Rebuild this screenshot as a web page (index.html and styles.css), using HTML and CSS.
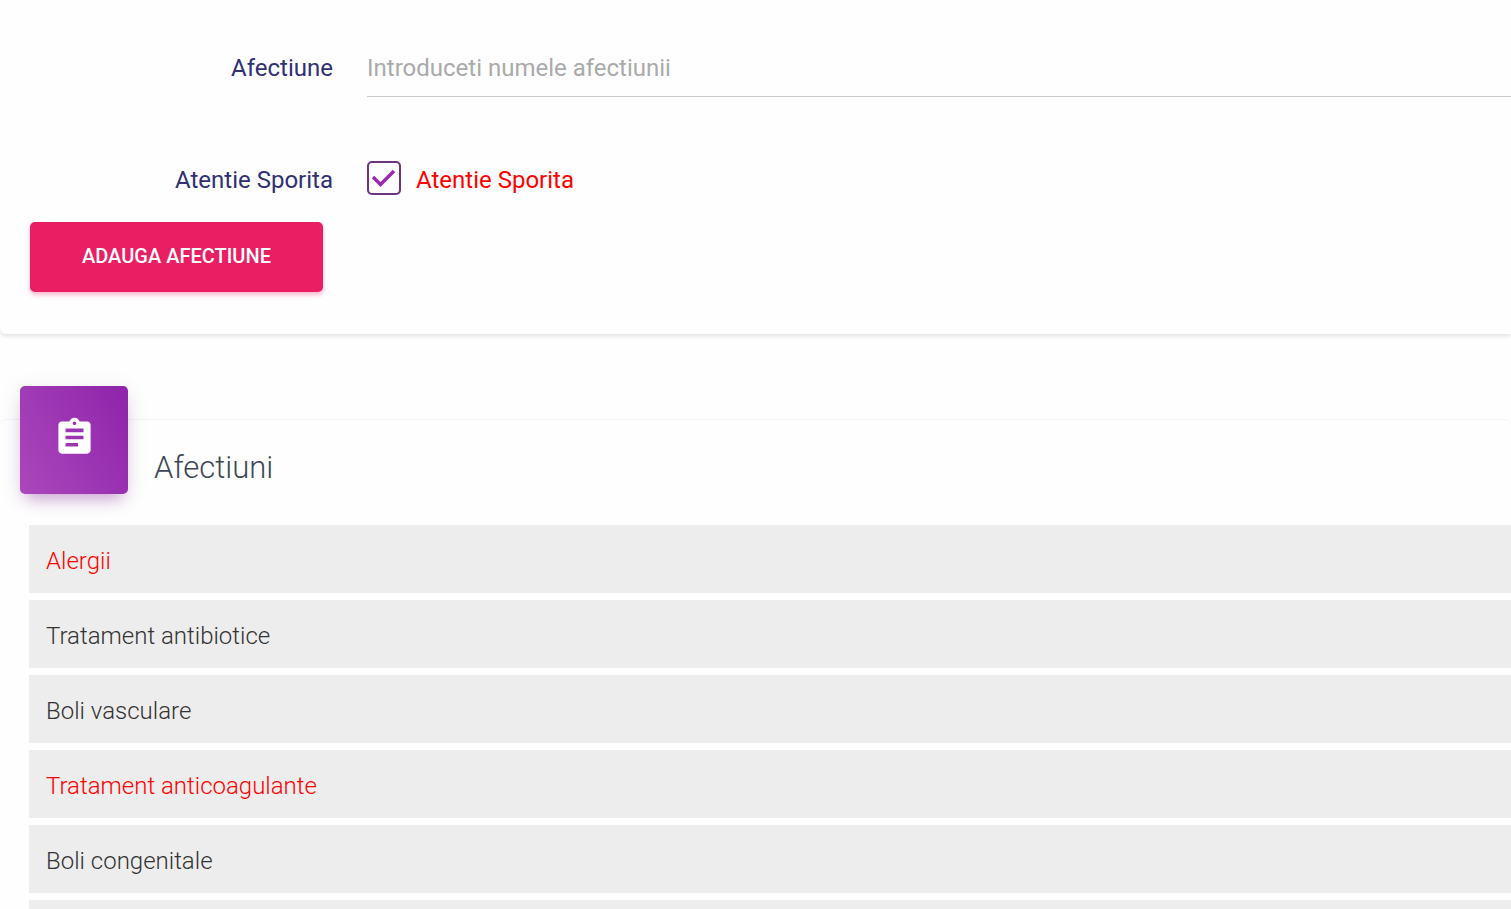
FILE: index.html
```html
<!DOCTYPE html>
<html lang="ro">
<head>
<meta charset="utf-8">
<meta name="viewport" content="width=device-width, initial-scale=1">
<title>Afectiuni</title>
<link rel="stylesheet" href="styles.css">
</head>
<body>
<main class="page">
  <form class="card form-card">
    <div class="form-row">
      <label class="form-label" for="afectiune">Afectiune</label>
      <input class="text-input" id="afectiune" type="text" placeholder="Introduceti numele afectiunii">
    </div>
    <div class="form-row check-row">
      <span class="form-label">Atentie Sporita</span>
      <label class="check">
        <span class="check-box">
          <input class="check-input" type="checkbox" checked>
          <svg class="check-mark" viewBox="0 0 34 34" aria-hidden="true"><path d="M6 16l7.500 7.500L27 10" fill="none" stroke="#9c27b0" stroke-width="3.400"/></svg>
        </span>
        <span class="check-text">Atentie Sporita</span>
      </label>
    </div>
    <button class="btn" type="button">ADAUGA AFECTIUNE</button>
  </form>

  <section class="card list-card">
    <header class="card-header">
      <div class="card-icon">
        <svg class="icon" viewBox="0 0 24 24" aria-hidden="true"><path fill="#fff" d="M19 3h-4.180C14.400 1.840 13.300 1 12 1c-1.300 0-2.400.840-2.820 2H5c-1.100 0-2 .900-2 2v14c0 1.100.900 2 2 2h14c1.100 0 2-.900 2-2V5c0-1.100-.900-2-2-2zm-7 0c.550 0 1 .450 1 1s-.450 1-1 1-1-.450-1-1 .450-1 1-1zm2 14H7v-2h7v2zm3-4H7v-2h10v2zm0-4H7V7h10v2z"/></svg>
      </div>
      <h1 class="card-title">Afectiuni</h1>
    </header>
    <ul class="list">
      <li class="item alert">Alergii</li>
      <li class="item">Tratament antibiotice</li>
      <li class="item">Boli vasculare</li>
      <li class="item alert">Tratament anticoagulante</li>
      <li class="item">Boli congenitale</li>
      <li class="item"></li>
    </ul>
  </section>
</main>
</body>
</html>
```
FILE: styles.css
```css
* { box-sizing: border-box; }

body {
  margin: 0;
  background: #fefefe;
  font-family: Roboto, "Liberation Sans", sans-serif;
  font-size: 24px;
  line-height: 34px;
  overflow: hidden;
}

.page { height: 100vh; overflow: hidden; }

.card {
  background: #fefefe;
  border-radius: 6px;
}

.form-card {
  display: flex;
  flex-direction: column;
  align-items: flex-start;
  padding: 38px 0 42px 30px;
  border-radius: 0 0 0 6px;
  box-shadow: 0 2px 4px rgba(0, 0, 0, 0.12);
}

.form-row {
  display: grid;
  grid-template-columns: 303px 1fr;
  column-gap: 34px;
  align-items: center;
  align-self: stretch;
}

.form-label {
  color: #303074;
  text-align: right;
}

.text-input {
  width: 100%;
  height: 59px;
  padding: 2px 0 0;
  border: 0;
  border-bottom: 1px solid #c8c8c8;
  background: transparent;
  font: inherit;
  color: #333;
  outline: 0;
}

.text-input::placeholder { color: #aaa; opacity: 1; }

.check-row {
  align-items: start;
  margin: 64px 0 25px;
}

.check-row .form-label,
.check-text { padding-top: 2px; }

.check {
  display: flex;
  align-items: flex-start;
  gap: 15px;
  color: #f00;
}

.check-box { display: grid; }

.check-input,
.check-mark {
  grid-area: 1 / 1;
  width: 34px;
  height: 34px;
}

.check-input {
  appearance: none;
  margin: 0;
  border: 2px solid #6b3580;
  border-radius: 5px;
}

.check-mark { pointer-events: none; visibility: hidden; }
.check-input:checked + .check-mark { visibility: visible; }

.btn {
  padding: 17px 52px 19px;
  border: 0;
  border-radius: 5px;
  background: #e91e63;
  box-shadow: 0 3px 4px rgba(233, 30, 99, 0.3);
  color: #fff;
  font: 500 20px/34px Roboto, "Liberation Sans", sans-serif;
}

.list-card {
  margin-top: 85px;
  border-top: 1px solid #f2f2f2;
}

.card-header {
  display: flex;
  align-items: flex-end;
  gap: 26px;
  margin-top: -34px;
  padding-left: 20px;
}

.card-icon {
  display: grid;
  place-items: center;
  width: 108px;
  height: 108px;
  padding-bottom: 6px;
  border-radius: 5px;
  background: linear-gradient(60deg, #ab47bc, #8e24aa);
  box-shadow: 0 4px 24px rgba(0, 0, 0, 0.08), 0 10px 15px -6px rgba(156, 39, 176, 0.4);
}

.icon { width: 43px; height: 43px; }

.card-title {
  margin: 0 0 8px;
  color: #3c4858;
  font-size: 31px;
  font-weight: 300;
  line-height: 36px;
}

.list {
  display: grid;
  gap: 7px;
  margin: 31px 0 0;
  padding: 0 0 0 29px;
  list-style: none;
}

.item {
  min-height: 68px;
  padding: 19px 17px 15px;
  background: #ededed;
  color: #333;
  font-weight: 300;
}

.item.alert { color: #f00; }
```
